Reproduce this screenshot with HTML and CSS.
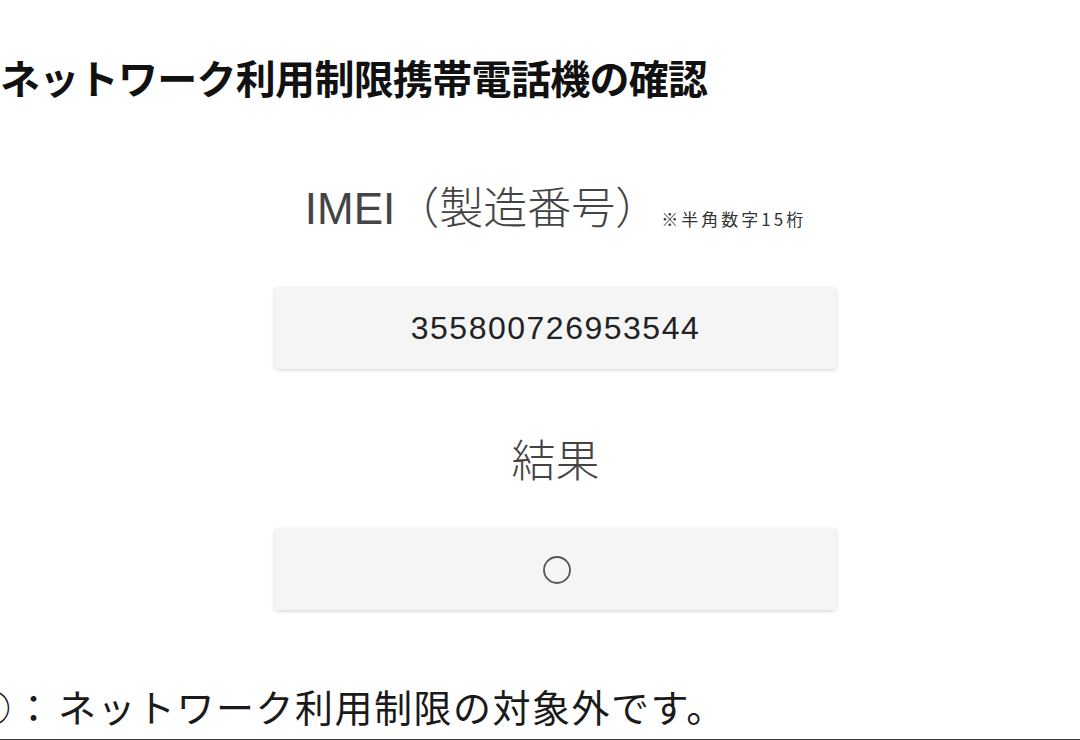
FILE: index.html
```html
<!DOCTYPE html>
<html lang="ja">
<head>
<meta charset="utf-8">
<link rel="stylesheet" href="styles.css">
</head>
<body>
<div class="page">
  <h1 class="title">ネットワーク利用制限携帯電話機の確認</h1>
  <section class="form">
    <div class="label">IMEI（製造番号）<span class="hint">※半角数字15桁</span></div>
    <div class="box box-imei">355800726953544</div>
    <div class="label label-result">結果</div>
    <div class="box box-result">
      <svg class="mark" width="30" height="30" viewBox="0 0 30 30"><circle cx="15" cy="15" r="13" fill="none" stroke="#555" stroke-width="1.8"/></svg>
    </div>
  </section>
  <p class="note"><span class="sym">○</span><span class="colon">：</span>ネットワーク利用制限の対象外です。</p>
  <div class="rule"></div>
</div>
</body>
</html>
```
FILE: styles.css
```css
html, body {
  margin: 0;
  padding: 0;
  background: #ffffff;
  overflow: hidden;
}
body {
  width: 1080px;
  height: 740px;
  font-family: "Liberation Sans", "Noto Sans CJK JP", sans-serif;
  color: #222;
}
.page {
  display: flex;
  flex-direction: column;
  height: 740px;
}
.title {
  margin: 57px 0 0 0;
  font-family: "Noto Sans CJK JP", sans-serif;
  font-size: 40px;
  line-height: 40px;
  font-weight: 700;
  color: #111;
  white-space: nowrap;
  letter-spacing: -0.7px;
}
.form {
  margin-left: 275px;
  width: 561px;
  display: flex;
  flex-direction: column;
  align-items: stretch;
  text-align: center;
}
.label {
  margin-top: 90px;
  height: 44px;
  font-size: 44px;
  line-height: 44px;
  font-weight: 300;
  color: #444;
  white-space: nowrap;
}
.hint {
  font-family: "Noto Sans CJK JP", sans-serif;
  font-size: 17px;
  line-height: 17px;
  font-weight: 400;
  color: #333;
  margin-left: 2px;
  letter-spacing: 3px;
  position: relative;
  top: 2px;
}
.label-result {
  margin-top: 67px;
  font-family: "Noto Sans CJK JP", sans-serif;
}
.box {
  height: 81px;
  background: #f5f5f5;
  box-shadow: 0 1px 4px rgba(0, 0, 0, 0.18);
  border-radius: 2px;
  display: flex;
  align-items: center;
  justify-content: center;
}
.box-imei {
  margin-top: 57px;
  font-size: 32px;
  letter-spacing: 1.5px;
  color: #222;
}
.box-result {
  margin-top: 49px;
}
.mark {
  display: block;
  margin-left: 2px;
}
.note {
  margin: 77px 0 0 -27px;
  font-family: "Noto Sans CJK JP", sans-serif;
  font-size: 38px;
  line-height: 38px;
  color: #1a1a1a;
  white-space: nowrap;
  letter-spacing: 1.5px;
}
.sym {
  margin-right: 2px;
}
.colon {
  margin-right: 4px;
}
.rule {
  margin-top: 14px;
  height: 2px;
  background: #3c3c3c;
}
```
